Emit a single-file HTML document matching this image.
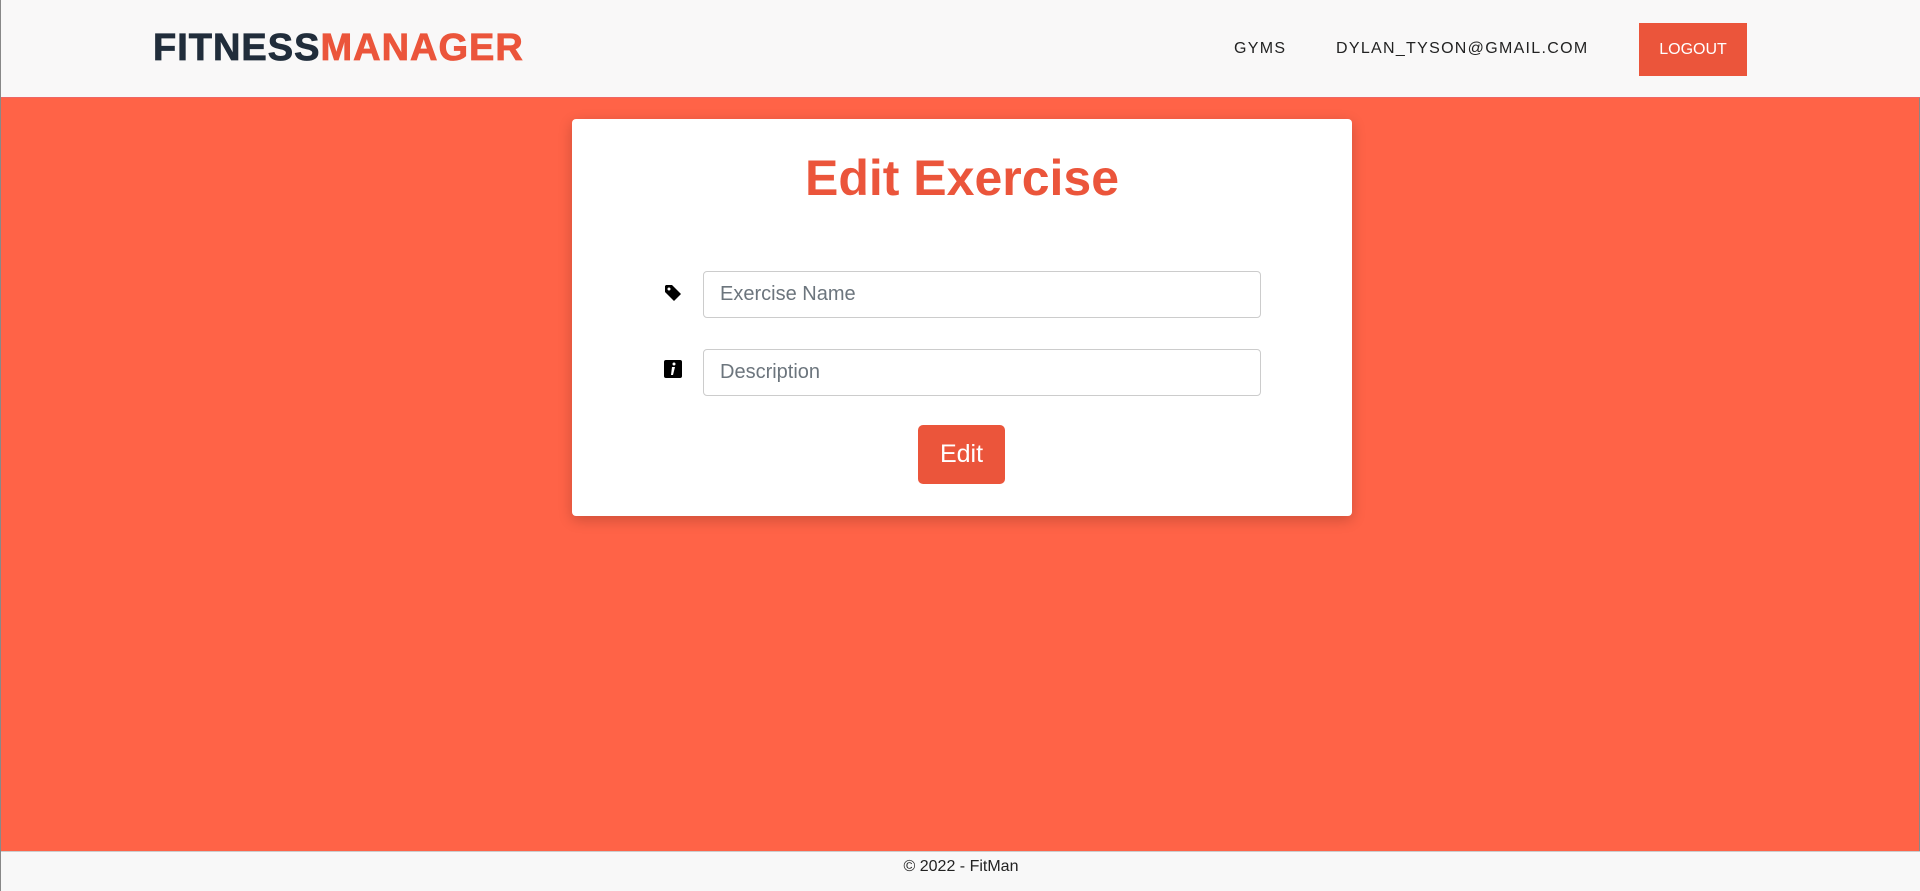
<!DOCTYPE html>
<html><head><meta charset="utf-8"><style>
*{box-sizing:border-box;margin:0;padding:0}
body{width:1920px;height:891px;overflow:hidden;background:#ff6347;font-family:"Liberation Sans",sans-serif;position:relative;border-left:1px solid #888;border-right:1px solid #888}
.hdr{position:absolute;left:0;top:0;width:1920px;height:98px;background:#f9f8f8;border-bottom:1px solid #e66}
.logo{position:absolute;left:152px;top:27px;font-size:38px;font-weight:900;letter-spacing:1px;color:#212d3b;-webkit-text-stroke:0.8px currentColor}
.logo span{color:#eb553b}
.nav{position:absolute;top:40px;font-size:16px;color:#222;letter-spacing:1.3px}
.btn1{position:absolute;left:1638px;top:23px;width:108px;height:53px;background:#eb553b;color:#fff;font-size:16px;display:flex;align-items:center;justify-content:center}
.card{position:absolute;left:571px;top:119px;width:780px;height:397px;background:#fff;border-radius:4px;box-shadow:0 4px 14px rgba(0,0,0,.2)}
h1{position:absolute;left:0;width:780px;top:30px;text-align:center;font-size:50px;font-weight:bold;color:#eb553b}
.inp{position:absolute;left:131px;width:558px;height:47px;border:1px solid #ccc;border-radius:4px;font-size:20px;color:#6c757d;padding:0 16px;display:flex;align-items:center}
.ic{position:absolute;left:91px;width:20px;height:20px}
.eb{position:absolute;left:346px;top:306px;width:87px;height:59px;background:#eb553b;border-radius:5px;color:#fff;font-size:25px;display:flex;align-items:center;justify-content:center}
.ft{position:absolute;left:0;top:851px;width:1920px;height:40px;background:#f8f8f8;border-top:1px solid #ccc;text-align:center;font-size:16px;color:#222;padding-top:6px}
</style></head><body>
<div class="hdr">
<div class="logo">FITNESS<span>MANAGER</span></div>
<div class="nav" style="left:1233px">GYMS</div>
<div class="nav" style="left:1335px">DYLAN_TYSON@GMAIL.COM</div>
<div class="btn1">LOGOUT</div>
</div>
<div class="card">
<h1>Edit Exercise</h1>
<svg class="ic" style="top:164px" viewBox="0 0 20 20"><path d="M2 3v6l9 9 7-7-9-9H3z" fill="#000"/><circle cx="6" cy="6" r="1.5" fill="#fff"/></svg>
<div class="inp" style="top:152px">Exercise Name</div>
<svg class="ic" style="top:240px" viewBox="0 0 20 20"><rect x="1" y="1" width="18" height="18" rx="2" fill="#000"/><circle cx="11" cy="5" r="1.5" fill="#fff"/><path d="M9 8h3l-2 8H8z" fill="#fff"/></svg>
<div class="inp" style="top:230px">Description</div>
<div class="eb">Edit</div>
</div>
<div class="ft">© 2022 - FitMan</div>
</body></html>
